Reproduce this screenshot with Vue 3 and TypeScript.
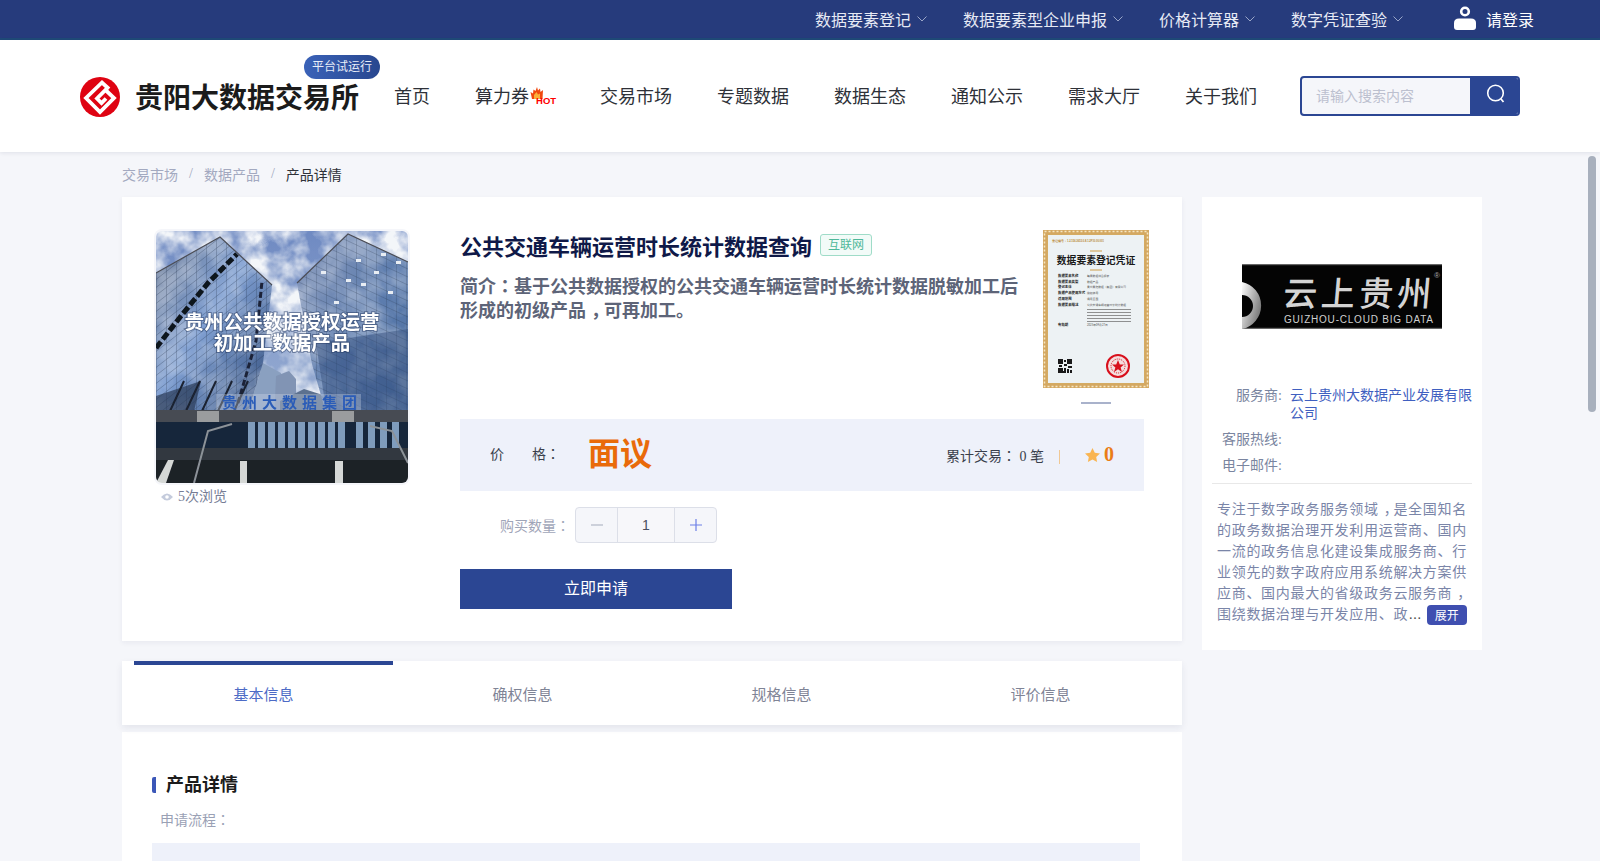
<script setup lang="ts">
const topLinks = [
  { label: '数据要素登记', gap: 36 },
  { label: '数据要素型企业申报', gap: 36 },
  { label: '价格计算器', gap: 36 },
  { label: '数字凭证查验', gap: 51 },
]
const navItems = ['首页', '算力券', '交易市场', '专题数据', '数据生态', '通知公示', '需求大厅', '关于我们']
const crumbs = ['交易市场', '数据产品']
const tabs = ['基本信息', '确权信息', '规格信息', '评价信息']
const descLines = [
  '专注于数字政务服务领域，是全国知名',
  '的政务数据治理开发利用运营商、国内',
  '一流的政务信息化建设集成服务商、行',
  '业领先的数字政府应用系统解决方案供',
  '应商、国内最大的省级政务云服务商，',
]
const certRows = [
  { y: 47, key: '数据要素名称', val: '每周数据综合报表' },
  { y: 52.5, key: '数据要素类型', val: '数据产品' },
  { y: 58, key: '登记主体', val: '贵州贵阳数据（集团）有限公司' },
  { y: 64, key: '数据产品使用方式', val: '授权使用' },
  { y: 70, key: '适用范围', val: '通用全国' },
  { y: 76, key: '数据要素描述', val: '公共交通车辆运营时长统计数据' },
  { y: 96, key: '有效期', val: '2025年04月27日' },
]
const certLines = [79, 82, 85, 88, 91]
const qrCells = [
  [0, 0, 5, 5], [9, 0, 5, 5], [0, 9, 5, 5], [6, 1, 2, 2], [6, 5, 3, 2], [10, 7, 4, 2],
  [6, 9, 2, 3], [9, 10, 2, 2], [12, 11, 2, 3], [5, 12, 3, 2], [1, 6, 3, 2], [9, 12, 2, 2],
]
const lobbyPanes = [92, 102, 112, 122, 132, 142, 152, 162, 172, 182, 200, 212, 224, 236]
const struts = [14, 30, 46, 62, 78]
const towerLights = [
  [190, 48], [205, 52], [218, 40], [232, 60], [240, 30], [178, 70], [225, 22], [200, 28], [165, 40],
]
</script>

<template>
  <div class="page">
    <div class="topbar">
      <div v-for="link in topLinks" :key="link.label" class="top-link" :style="{ marginRight: link.gap + 'px' }">
        <span>{{ link.label }}</span>
        <svg width="10" height="6" viewBox="0 0 10 6"><polyline points="0.5,0.5 5,5 9.5,0.5" fill="none" stroke="#9aa6c8" stroke-width="1" /></svg>
      </div>
      <svg class="user-icon" width="22" height="24" viewBox="0 0 22 24">
        <circle cx="11" cy="5.5" r="3.8" fill="none" stroke="#fff" stroke-width="2.6" />
        <path d="M0 17 Q0 12.5 5 12.5 H17 Q22 12.5 22 17 V21 Q22 24 19 24 H3 Q0 24 0 21 Z" fill="#fff" />
      </svg>
      <span class="login">请登录</span>
    </div>

    <header class="header">
      <div class="brand">
        <svg class="logo" width="40" height="40" viewBox="0 0 40 40">
          <circle cx="20" cy="20" r="20" fill="#df0312" />
          <path d="M29 12 L22 5.500 L6 21 L20 35 L34 21 L25.500 13 L17 21.500 L21.500 26 L26 21.500" fill="none" stroke="#fff" stroke-width="3.800" stroke-linejoin="miter" />
        </svg>
        <span class="brand-name">贵阳大数据交易所</span>
        <span class="trial">平台试运行</span>
      </div>
      <nav class="nav">
        <a v-for="item in navItems" :key="item" class="nav-item">
          {{ item }}
          <span v-if="item === '算力券'" class="hot">
            <svg width="14" height="12" viewBox="0 0 14 12">
              <path d="M7 0 L8 3.500 L10 1.500 L10.500 5 L13 3 L12.500 12 H2 L0.500 5 L3 6.500 L3.500 2.500 L5.500 4 Z" fill="#f0490f" />
              <path d="M6.500 5 L8 7.500 L10 6.500 L10 12 H4 L4 8 Z" fill="#fbb03b" />
            </svg>
            <b>HOT</b>
          </span>
        </a>
      </nav>
      <div class="search">
        <div class="search-input">请输入搜索内容</div>
        <button class="search-btn">
          <svg width="20" height="20" viewBox="0 0 20 20"><circle cx="9.500" cy="9" r="7.800" fill="none" stroke="#fff" stroke-width="1.600" /><line x1="15" y1="15" x2="17.500" y2="18" stroke="#fff" stroke-width="1.800" /></svg>
        </button>
      </div>
    </header>

    <main class="main">
      <div class="breadcrumb">
        <template v-for="c in crumbs" :key="c">
          <span class="crumb">{{ c }}</span>
          <span class="sep">/</span>
        </template>
        <span class="crumb-cur">产品详情</span>
      </div>

      <div class="columns">
        <div class="left-col">
          <section class="card product">
            <div class="gallery">
              <div class="photo-frame">
                <svg class="photo" width="252" height="252" viewBox="0 0 252 252">
                  <defs>
                    <linearGradient id="sky" x1="0" y1="0" x2="0" y2="1">
                      <stop offset="0" stop-color="#6f8ac2" />
                      <stop offset="0.6" stop-color="#92a8d0" />
                      <stop offset="1" stop-color="#7f9bcc" />
                    </linearGradient>
                    <linearGradient id="towerL" x1="0" y1="0" x2="1" y2="1">
                      <stop offset="0" stop-color="#6f7d96" />
                      <stop offset="0.45" stop-color="#7f9fd2" />
                      <stop offset="1" stop-color="#2f4a78" />
                    </linearGradient>
                    <linearGradient id="towerR" x1="0" y1="0" x2="1" y2="1">
                      <stop offset="0" stop-color="#8c9cbd" />
                      <stop offset="0.55" stop-color="#5c7cae" />
                      <stop offset="1" stop-color="#4a6c9e" />
                    </linearGradient>
                    <pattern id="glass" width="10" height="8" patternUnits="userSpaceOnUse" patternTransform="skewY(-38)">
                      <path d="M0 0 H10 M0 0 V8" stroke="#25344f" stroke-opacity="0.6" stroke-width="0.8" fill="none" />
                    </pattern>
                    <pattern id="glass2" width="10" height="8" patternUnits="userSpaceOnUse" patternTransform="skewY(25)">
                      <path d="M0 0 H10 M0 0 V8" stroke="#25344f" stroke-opacity="0.55" stroke-width="0.8" fill="none" />
                    </pattern>
                    <clipPath id="towers"><polygon points="0,42 64,6 116,54 107,132 91,185 0,185" /><polygon points="141,52 192,3 252,31 252,185 171,185 156,133" /></clipPath>
                    <filter id="soft"><feGaussianBlur stdDeviation="0.35" /></filter>
                    <filter id="clouds" x="0" y="0" width="100%" height="100%">
                      <feTurbulence type="fractalNoise" baseFrequency="0.035" numOctaves="4" seed="7" />
                      <feColorMatrix type="matrix" values="0 0 0 0 0.9  0 0 0 0 0.92  0 0 0 0 0.95  2.8 0 0 0 -0.950" />
                    </filter>
                  </defs>
                  <g filter="url(#soft)">
                    <rect width="252" height="252" fill="url(#sky)" />
                    <rect width="252" height="190" filter="url(#clouds)" />
                    <polygon points="107,132 125,142 125,185 91,185" fill="#8aa0c0" />
                    <polygon points="120,145 133,140 140,148 140,190 118,190" fill="#8194b4" />
                    <polygon points="124,170 148,158 170,165 170,190 124,190" fill="#5c718f" />
                    <polygon points="0,42 64,6 116,54 107,132 91,185 0,185" fill="url(#towerL)" />
                    <polygon points="141,52 192,3 252,31 252,185 171,185 156,133" fill="url(#towerR)" />
                    <g clip-path="url(#towers)" opacity="0.3">
                      <rect width="252" height="190" filter="url(#clouds)" />
                    </g>
                    <polygon points="0,42 64,6 116,54 107,132 91,185 0,185" fill="url(#glass)" />
                    <polygon points="141,52 192,3 252,31 252,185 171,185 156,133" fill="url(#glass2)" />
                    <polygon points="160,112 252,98 252,185 171,185" fill="#2f4a78" fill-opacity="0.45" />
                    <polyline points="0,117 25,85 52,52 81,23" fill="none" stroke="#10141d" stroke-width="5" stroke-dasharray="8 3" />
                    <polyline points="82,172 100,110 106,50" fill="none" stroke="#1c2438" stroke-width="3" stroke-dasharray="6 3" />
                    <polyline points="0,42 64,6 116,54" fill="none" stroke="#4b4d56" stroke-width="1.200" />
                    <polyline points="141,52 192,3 252,31" fill="none" stroke="#4b4d56" stroke-width="1.200" />
                    <rect v-for="(p, i) in towerLights" :key="i" :x="p[0]" :y="p[1]" width="5" height="3" fill="#e8edf3" />
                    <polygon points="0,165 45,150 30,215 0,232" fill="#25344f" fill-opacity="0.65" />
                    <g stroke="#1a2230" stroke-width="2">
                      <line v-for="s in struts" :key="s" :x1="s" y1="180" :x2="s + 14" y2="150" />
                    </g>
                    <rect x="60" y="163" width="145" height="17" fill="#dfe6f1" fill-opacity="0.3" />
                    <rect y="179" width="252" height="12" fill="#474b52" />
                    <rect x="41" y="180" width="22" height="11" fill="#9a9c9e" />
                    <rect x="176" y="180" width="22" height="11" fill="#9a9c9e" />
                    <rect y="191" width="252" height="26" fill="#18263a" />
                    <rect v-for="x in lobbyPanes" :key="x" :x="x" y="191" width="7" height="26" fill="#7f9cbc" />
                    <rect y="217" width="252" height="12" fill="#30383f" />
                    <rect y="229" width="252" height="23" fill="#1d2128" />
                    <polygon points="0,252 12,229 18,229 10,252" fill="#d5d8d6" />
                    <rect x="84" y="230" width="7" height="22" fill="#d5d8d6" />
                    <rect x="179" y="230" width="8" height="22" fill="#d5d8d6" />
                    <polyline points="38,252 52,200 76,193" fill="none" stroke="#8c9298" stroke-width="2" />
                    <polyline points="252,232 236,200 214,195" fill="none" stroke="#8c9298" stroke-width="2" />
                    <text class="photo-title" x="126" y="98">贵州公共数据授权运营</text>
                    <text class="photo-title" x="126" y="119">初加工数据产品</text>
                    <text class="photo-brand" x="136" y="177">贵州大数据集团</text>
                  </g>
                </svg>
              </div>
              <div class="views">
                <svg width="12" height="8" viewBox="0 0 12 8"><path d="M0 4 Q6 -3 12 4 Q6 11 0 4 Z" fill="#c4cbdc" /><circle cx="6" cy="4" r="1.800" fill="#fff" /></svg>
                <span>5次浏览</span>
              </div>
            </div>

            <div class="info">
              <div class="info-head">
                <div class="info-text">
                  <div class="title-row">
                    <h1 class="title">公共交通车辆运营时长统计数据查询</h1>
                    <span class="tag">互联网</span>
                  </div>
                  <p class="intro">简介<span class="colon">：</span>基于公共数据授权的公共交通车辆运营时长统计数据脱敏加工后形成的初级产品<span class="comma">，</span>可再加工。</p>
                </div>
                <div class="cert-wrap">
                  <svg class="cert" width="106" height="158" viewBox="0 0 106 158">
                    <rect width="106" height="158" fill="#d4a862" />
                    <rect x="1.500" y="1.500" width="103" height="155" fill="none" stroke="#f6e7c4" stroke-width="1.500" stroke-dasharray="2 2" />
                    <rect x="4" y="4" width="98" height="150" fill="#fff" />
                    <rect x="4.500" y="4.500" width="97" height="149" fill="#edf2f4" stroke="#d4ab63" />
                    <text class="cert-no" x="9" y="12">登记编号：1.2.156.3653.0.8.1.2F10.00.001</text>
                    <line x1="47" y1="21" x2="59" y2="21" stroke="#d4ab63" stroke-width="1.200" />
                    <text class="cert-title" x="53" y="34">数据要素登记凭证</text>
                    <line x1="47" y1="40" x2="59" y2="40" stroke="#d4ab63" stroke-width="1.200" />
                    <g v-for="row in certRows" :key="row.y">
                      <text class="cert-key" x="15" :y="row.y">{{ row.key }}</text>
                      <text class="cert-val" x="44" :y="row.y">{{ row.val }}</text>
                    </g>
                    <rect v-for="y in certLines" :key="y" x="44" :y="y" width="44" height="0.800" fill="#777" />
                    <g transform="translate(15,129)" fill="#1a1a1a">
                      <rect v-for="(q, i) in qrCells" :key="i" :x="q[0]" :y="q[1]" :width="q[2]" :height="q[3]" />
                    </g>
                    <circle cx="75" cy="136" r="11" fill="#f4dede" stroke="#d8101c" stroke-width="2" />
                    <circle cx="75" cy="136" r="7" fill="none" stroke="#d8101c" stroke-width="1" stroke-dasharray="1 1" />
                    <polygon points="75,130 76.800,134.500 81,134.500 77.600,137.500 79,142 75,139.300 71,142 72.400,137.500 69,134.500 73.200,134.500" fill="#d8101c" />
                  </svg>
                  <div class="cert-dot"></div>
                </div>
              </div>

              <div class="price-band">
                <span class="price-label"><span>价</span><span>格<span class="colon">：</span></span></span>
                <span class="price">面议</span>
                <span class="trade">累计交易<span class="colon">：</span> 0 笔</span>
                <span class="band-sep"></span>
                <svg class="star" width="15" height="14" viewBox="0 0 15 14"><path d="M7.500 0 L9.800 4.700 L15 5.400 L11.200 9 L12.100 14 L7.500 11.600 L2.900 14 L3.800 9 L0 5.400 L5.200 4.700 Z" fill="#f9b552" /></svg>
                <span class="score">0</span>
              </div>

              <div class="qty-row">
                <span class="qty-label">购买数量<span class="colon">：</span></span>
                <div class="stepper">
                  <span class="step"><svg width="12" height="12" viewBox="0 0 12 12"><line x1="0" y1="6" x2="12" y2="6" stroke="#a4abbb" stroke-width="1" /></svg></span>
                  <span class="step-value">1</span>
                  <span class="step"><svg width="12" height="12" viewBox="0 0 12 12"><path d="M0 6 H12 M6 0 V12" stroke="#6c7fe6" stroke-width="1.200" /></svg></span>
                </div>
              </div>

              <button class="apply">立即申请</button>
            </div>
          </section>

          <div class="tabs">
            <div v-for="(tab, i) in tabs" :key="tab" :class="['tab', { active: i === 0 }]">{{ tab }}</div>
          </div>

          <section class="card details">
            <h2 class="details-title">产品详情</h2>
            <div class="details-sub">申请流程<span class="colon">：</span></div>
            <div class="flow-block"></div>
          </section>
        </div>

        <aside class="card vendor">
          <svg class="vendor-logo" width="200" height="65" viewBox="0 0 200 65">
            <defs>
              <linearGradient id="ring" x1="0" y1="0" x2="1" y2="0.600">
                <stop offset="0" stop-color="#fff" />
                <stop offset="1" stop-color="#777" />
              </linearGradient>
            </defs>
            <rect width="200" height="65" fill="#040404" />
            <rect width="200" height="1.200" fill="#666" />
            <rect y="63.800" width="200" height="1.200" fill="#666" />
            <path d="M0 18 A24 24 0 0 1 0 65 V53 A11 11 0 0 0 0 31 Z" fill="url(#ring)" />
            <text class="vendor-cn" x="44" y="42" transform="skewX(-5)">云上贵州</text>
            <text class="vendor-en" x="42" y="59" textLength="149">GUIZHOU-CLOUD  BIG  DATA</text>
            <text class="vendor-r" x="192" y="14">®</text>
          </svg>
          <dl class="facts">
            <div class="fact"><dt>服务商:</dt><dd class="link">云上贵州大数据产业发展有限公司</dd></div>
            <div class="fact"><dt>客服热线:</dt><dd></dd></div>
            <div class="fact"><dt>电子邮件:</dt><dd></dd></div>
          </dl>
          <div class="desc">
            <div v-for="line in descLines" :key="line" class="desc-line">
              <template v-for="(part, j) in line.split('，')" :key="j"><span v-if="j" class="comma">，</span>{{ part }}</template>
            </div>
            <div class="desc-line desc-last">
              <span>围绕数据治理与开发应用、政</span><i>...</i>
              <button class="expand">展开</button>
            </div>
          </div>
        </aside>
      </div>
    </main>

    <div class="scroll-thumb"></div>
  </div>
</template>

<style scoped>
.page {
  position: relative;
  height: 100vh;
  display: flex;
  flex-direction: column;
  background: #f5f6fa;
  font-family: "Liberation Serif", "Noto Sans CJK SC", serif;
  overflow: hidden;
}
.scroll-thumb {
  position: absolute;
  z-index: 3;
  right: 4px;
  top: 156px;
  width: 8px;
  height: 256px;
  border-radius: 4px;
  background: #a8b0bd;
}
.colon { font-family: "Noto Sans CJK TC", sans-serif; }
.comma { display: inline-block; transform: translateX(5px); }

.topbar {
  flex: none;
  height: 38px;
  border-bottom: 2px solid #1f4a78;
  background: #263b7c;
  display: flex;
  align-items: center;
  justify-content: flex-end;
  padding-right: 66px;
  color: #e6eaf5;
  font-size: 16px;
}
.top-link { display: flex; align-items: center; gap: 6px; }
.user-icon { margin-right: 10px; margin-top: -2px; }
.login { color: #fff; }

.header {
  flex: none;
  position: relative;
  z-index: 2;
  height: 112px;
  background: #fff;
  box-shadow: 0 1px 4px rgba(30, 40, 80, 0.1);
  display: flex;
  align-items: center;
  padding-left: 80px;
}
.brand { position: relative; display: flex; align-items: center; gap: 15px; margin-right: 35px; }
.logo { margin-top: 2px; }
.brand-name { font-size: 28px; font-weight: 700; color: #1b1b1b; white-space: nowrap; }
.trial {
  position: absolute;
  left: 224px;
  top: -20px;
  width: 76px;
  height: 24px;
  border-radius: 12px;
  background: linear-gradient(90deg, #3a62b8, #28478f);
  color: #e8edf8;
  font-size: 12px;
  line-height: 24px;
  text-align: center;
}
.nav { display: flex; gap: 45px; font-size: 18px; color: #2e3138; margin-top: -2px; }
.nav-item { display: flex; align-items: center; white-space: nowrap; }
.hot { position: relative; width: 26px; height: 18px; }
.hot svg { position: absolute; left: 1px; top: 1px; }
.hot b {
  position: absolute;
  left: 7px;
  top: 10px;
  font: 700 9.5px/9px "Liberation Sans", sans-serif;
  color: #f00;
}
.search {
  margin-left: 43px;
  width: 220px;
  height: 40px;
  box-sizing: border-box;
  border: 2px solid #2b4693;
  border-radius: 4px;
  display: flex;
  overflow: hidden;
  background: #f5f6fa;
}
.search-input { flex: 1; font-size: 14px; line-height: 38px; padding-left: 14px; color: #bcc0cf; }
.search-btn { width: 48px; border: 0; padding: 0 0 2px 4px; background: #2b4693; }

.main { flex: 1; min-height: 0; overflow: hidden; padding-left: 122px; }

.breadcrumb { height: 45px; display: flex; align-items: center; font-size: 14px; padding-bottom: 1px; box-sizing: border-box; }
.crumb { color: #a3a9c0; }
.sep { color: #a3a9c0; margin: 0 11px; }
.crumb-cur { color: #2e3138; }

.columns { display: flex; align-items: flex-start; gap: 20px; }
.left-col { width: 1060px; }
.card { background: #fff; }

.product {
  height: 444px;
  box-sizing: border-box;
  padding: 34px 38px 0 34px;
  display: flex;
  gap: 52px;
  box-shadow: 0 2px 5px rgba(30, 40, 80, 0.06);
}
.gallery { width: 252px; flex: none; }
.photo-frame { box-shadow: 0 0 0 2px #f5f6fa; border-radius: 6px; height: 252px; }
.photo { display: block; border-radius: 6px; }
.photo-title {
  font-family: "Noto Sans CJK SC", sans-serif;
  font-size: 19.5px;
  font-weight: 700;
  fill: #fff;
  text-anchor: middle;
  paint-order: stroke;
  stroke: rgba(45, 65, 105, 0.55);
  stroke-width: 2px;
}
.photo-brand { font-family: "Noto Sans CJK SC", sans-serif; font-size: 15px; font-weight: 700; fill: #2a5cb8; text-anchor: middle; letter-spacing: 5px; }
.views { display: flex; align-items: center; gap: 5px; margin: 4px 0 0 5px; font-size: 14px; line-height: 20px; color: #767d95; }

.info { width: 684px; flex: none; }
.info-head { height: 188px; display: flex; justify-content: space-between; }
.info-text { width: 570px; }
.title-row { display: flex; align-items: center; gap: 8px; height: 32px; margin-top: -2px; }
.title { margin: 0; font-size: 22px; font-weight: 700; color: #0f1948; white-space: nowrap; }
.tag {
  width: 52px;
  height: 22px;
  box-sizing: border-box;
  border: 1px solid #9fdcc8;
  border-radius: 3px;
  background: #f2fbf8;
  color: #4fb89a;
  font-size: 12px;
  line-height: 20px;
  text-align: center;
}
.intro { margin: 12px 0 0; font-size: 18px; font-weight: 700; line-height: 24px; color: #5d6478; }
.cert-wrap { margin: -1px -5px 0 0; width: 106px; }
.cert { display: block; }
.cert-no { font-family: "Liberation Sans", sans-serif; font-size: 2.600px; fill: #b8862f; font-weight: 700; }
.cert-title { font-family: "Noto Sans CJK SC", sans-serif; font-size: 9.800px; font-weight: 700; fill: #1a1a1a; text-anchor: middle; }
.cert-key { font-family: "Noto Sans CJK SC", sans-serif; font-size: 3.400px; font-weight: 700; fill: #222; }
.cert-val { font-family: "Noto Sans CJK SC", sans-serif; font-size: 2.800px; fill: #555; }
.cert-dot { width: 30px; height: 2px; background: #a9b2cb; margin: 14px 0 0 38px; }

.price-band {
  height: 72px;
  background: #eef1fa;
  display: flex;
  align-items: center;
  padding: 0 30px;
  font-size: 14px;
  color: #3a3f4c;
}
.price-label { width: 70px; display: flex; justify-content: space-between; margin-top: -4px; }
.price { margin-left: 28px; font-size: 32px; font-weight: 700; color: #e96a0a; margin-top: -8px; }
.trade { margin-left: auto; }
.band-sep { width: 1px; height: 14px; background: #f0c894; margin: 4px 25px 0 15px; }
.star { margin-right: 4px; }
.score { font-size: 20px; font-weight: 700; color: #ea7d17; margin-top: -1px; }

.qty-row { display: flex; align-items: center; margin: 16px 0 0 40px; }
.qty-label { width: 75px; font-size: 14px; color: #9fa5b8; white-space: nowrap; }
.stepper {
  width: 142px;
  height: 36px;
  box-sizing: border-box;
  border: 1px solid #dcdfe8;
  border-radius: 4px;
  background: #f5f6fa;
  display: flex;
}
.step { width: 41px; display: flex; align-items: center; justify-content: center; }
.step-value {
  flex: 1;
  border-left: 1px solid #dcdfe8;
  border-right: 1px solid #dcdfe8;
  background: #f7f7fa;
  text-align: center;
  font: 14px/34px "Liberation Sans", sans-serif;
  color: #4a4f60;
}
.apply {
  display: block;
  width: 272px;
  height: 40px;
  margin-top: 26px;
  padding: 0 0 4px;
  border: 0;
  background: #2b4693;
  color: #fff;
  font: 16px "Liberation Serif", "Noto Sans CJK SC", serif;
}

.tabs {
  height: 64px;
  margin-top: 20px;
  padding: 0 12px;
  background: #fff;
  display: flex;
  position: relative;
  z-index: 1;
  box-shadow: 0 3px 7px rgba(30, 40, 80, 0.08);
}
.tab { width: 259px; box-sizing: border-box; border-top: 4px solid transparent; text-align: center; font-size: 15px; line-height: 60px; color: #7f8496; }
.tab.active { border-top-color: #2b4693; color: #4d6bc6; }

.details { margin-top: 7px; padding: 45px 42px 0 30px; height: 1380px; box-sizing: border-box; }
.details-title {
  margin: 0;
  padding-left: 10px;
  border-left: 4px solid #3b57b8;
  border-radius: 2px;
  font-size: 18px;
  font-weight: 700;
  line-height: 16px;
  height: 16px;
  color: #1b1b1b;
}
.details-sub { margin: 16px 0 0 8px; font-size: 14px; line-height: 20px; color: #9aa1b5; }
.flow-block { height: 260px; margin-top: 12px; background: #eef1fa; }

.vendor { width: 280px; height: 453px; box-sizing: border-box; padding: 67px 10px 0; flex: none; }
.vendor-logo { display: block; margin-left: 30px; }
.vendor-cn { font-family: "Noto Sans CJK SC", sans-serif; font-size: 34px; fill: #d4d4d4; letter-spacing: 4px; font-weight: 500; }
.vendor-en { font-family: "Liberation Sans", sans-serif; font-size: 10px; fill: #d0d0d0; white-space: pre; }
.vendor-r { font-family: "Liberation Sans", sans-serif; font-size: 8px; fill: #aaa; }
.facts { margin: 58px 0 0; padding-bottom: 8px; border-bottom: 1px solid #e8e8e8; font-size: 14px; line-height: 18px; color: #7a85a0; }
.fact { display: flex; gap: 8px; margin-bottom: 8px; }
.fact:last-child { margin-bottom: 0; }
.fact dt { width: 70px; flex: none; text-align: right; }
.fact dd { margin: 0; flex: 1; }
.fact .link { color: #3f5fc0; }
.desc { margin: 15px 0 0 5px; font-size: 14px; line-height: 21px; color: #7a85a8; letter-spacing: 0.7px; }
.desc-line { white-space: nowrap; }
.desc-last { display: flex; align-items: center; }
.desc-last i { font-style: normal; color: #444; margin-left: 1px; }
.expand {
  width: 40px;
  height: 20px;
  margin-left: 5px;
  padding: 0;
  border: 0;
  border-radius: 4px;
  background: #3f4fb0;
  color: #fff;
  font: 12px "Noto Sans CJK SC", sans-serif;
}
</style>

<style>
html, body { margin: 0; height: 100%; overflow: hidden; }
</style>
